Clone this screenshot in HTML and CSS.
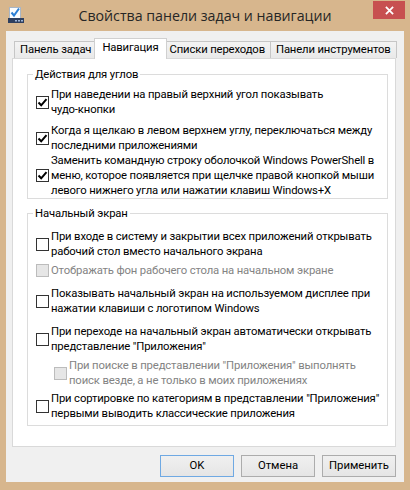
FILE: index.html
```html
<!DOCTYPE html>
<html lang="ru">
<head>
<meta charset="utf-8">
<title>Свойства панели задач и навигации</title>
<link rel="stylesheet" href="styles.css">
</head>
<body>
<div class="window">
  <div class="titlebar">
    <div class="tb-left">
      <svg class="app-icon" viewBox="0 0 16 16" width="16" height="16">
        <rect x="1.5" y="0.5" width="11" height="11" fill="#fbfdff" stroke="#a9b6c6"/>
        <path d="M3.5 5.5 L6 8.5 L11 1.5" fill="none" stroke="#2b7fd6" stroke-width="2"/>
        <rect x="0" y="11" width="16" height="5" fill="#2e3f5f"/>
        <rect x="7" y="13" width="2" height="1.5" fill="#9fb6d8"/>
        <rect x="10" y="13" width="2" height="1.5" fill="#9fb6d8"/>
        <rect x="13" y="13" width="2" height="1.5" fill="#9fb6d8"/>
      </svg>
    </div>
    <div class="title">Свойства панели задач и навигации</div>
    <div class="tb-right">
      <div class="close">
        <svg viewBox="0 0 10 10" width="9" height="9"><path d="M1 1 L9 9 M9 1 L1 9" stroke="#fff" stroke-width="2"/></svg>
      </div>
    </div>
  </div>

  <div class="client">
    <div class="tabs">
      <div class="tab">Панель задач</div>
      <div class="tab active">Навигация</div>
      <div class="tab">Списки переходов</div>
      <div class="tab">Панели инструментов</div>
    </div>

    <div class="panel">
      <fieldset class="group">
        <legend>Действия для углов</legend>
        <div class="check gap5">
          <span class="box checked"><svg viewBox="0 0 11 11" width="11" height="11"><path d="M1.5 5.5 L4.2 8.3 L9.5 2.2" fill="none" stroke="#000" stroke-width="2"/></svg></span>
          <span class="text">При наведении на правый верхний угол показывать<br>чудо-кнопки</span>
        </div>
        <div class="check gap6">
          <span class="box checked"><svg viewBox="0 0 11 11" width="11" height="11"><path d="M1.5 5.5 L4.2 8.3 L9.5 2.2" fill="none" stroke="#000" stroke-width="2"/></svg></span>
          <span class="text">Когда я щелкаю в левом верхнем углу, переключаться между<br>последними приложениями</span>
        </div>
        <div class="check">
          <span class="box checked"><svg viewBox="0 0 11 11" width="11" height="11"><path d="M1.5 5.5 L4.2 8.3 L9.5 2.2" fill="none" stroke="#000" stroke-width="2"/></svg></span>
          <span class="text">Заменить командную строку оболочкой Windows PowerShell в<br>меню, которое появляется при щелчке правой кнопкой мыши<br>левого нижнего угла или нажатии клавиш Windows+X</span>
        </div>
      </fieldset>

      <fieldset class="group second">
        <legend>Начальный экран</legend>
        <div class="check gap8">
          <span class="box"></span>
          <span class="text">При входе в систему и закрытии всех приложений открывать<br>рабочий стол вместо начального экрана</span>
        </div>
        <div class="check gap4 disabled">
          <span class="box"></span>
          <span class="text">Отображать фон рабочего стола на начальном экране</span>
        </div>
        <div class="check gap8">
          <span class="box"></span>
          <span class="text">Показывать начальный экран на используемом дисплее при<br>нажатии клавиши с логотипом Windows</span>
        </div>
        <div class="check gap8">
          <span class="box"></span>
          <span class="text">При переходе на начальный экран автоматически открывать<br>представление &quot;Приложения&quot;</span>
        </div>
        <div class="check gap4 sub disabled">
          <span class="box"></span>
          <span class="text">При поиске в представлении &quot;Приложения&quot; выполнять<br>поиск везде, а не только в моих приложениях</span>
        </div>
        <div class="check gap3">
          <span class="box"></span>
          <span class="text">При сортировке по категориям в представлении &quot;Приложения&quot;<br>первыми выводить классические приложения</span>
        </div>
      </fieldset>
    </div>

    <div class="buttons">
      <button class="btn default">OK</button>
      <button class="btn">Отмена</button>
      <button class="btn">Применить</button>
    </div>
  </div>
</div>
</body>
</html>
```

FILE: styles.css
```css
html, body {
  margin: 0;
  padding: 0;
}

body {
  width: 410px;
  height: 490px;
  overflow: hidden;
  background: #d7b68d;
  font-family: Roboto, "Open Sans", sans-serif;
  font-size: 11.3px;
  letter-spacing: -0.15px;
  color: #000;
}

.window {
  height: 490px;
  display: flex;
  flex-direction: column;
}

/* Title bar */
.titlebar {
  height: 31px;
  flex: none;
  display: grid;
  grid-template-columns: 1fr auto 1fr;
}

.tb-left {
  padding: 7px 0 0 8px;
}

.app-icon {
  display: block;
}

.title {
  font-family: "Open Sans", sans-serif;
  font-size: 14.2px;
  letter-spacing: 0;
  line-height: 20px;
  padding-top: 6px;
  color: #262626;
  white-space: nowrap;
}

.tb-right {
  display: flex;
  justify-content: flex-end;
  align-items: flex-start;
}

.close {
  width: 32px;
  height: 18px;
  margin: 1px 5px 0 0;
  background: #c75050;
  display: flex;
  align-items: center;
  justify-content: center;
}

.close svg {
  display: block;
}

/* Client area */
.client {
  margin: 0 6px;
  height: 451px;
  box-sizing: border-box;
  background: #f0f0f0;
  padding: 7px 8px 0 6px;
}

/* Tabs */
.tabs {
  display: flex;
  align-items: flex-end;
  height: 21px;
  padding-left: 3px;
  margin-bottom: -1px;
  position: relative;
  z-index: 1;
}

.tab {
  height: 17px;
  box-sizing: border-box;
  line-height: 16px;
  padding: 0 5px;
  margin: 0 0 1px -1px;
  border: 1px solid #c6c6c6;
  border-bottom: 0;
  background: linear-gradient(#f3f3f3, #e9e9e9);
  white-space: nowrap;
}

.tab.active {
  height: 21px;
  line-height: 18px;
  padding: 0 7px;
  margin: 0 -2px 0 -3px;
  background: #fff;
  border-color: #d0d0d0;
  position: relative;
  z-index: 2;
}

/* Tab page */
.panel {
  height: 389px;
  box-sizing: border-box;
  background: #fff;
  border: 1px solid #d9d9d9;
  padding: 8px 7px 0 14px;
}

.group {
  margin: 0;
  padding: 0 0 0 8px;
  border: 1px solid #dcdcdc;
  min-width: 0;
}

.group legend {
  padding: 0 2px;
  margin-left: -3px;
  line-height: 15px;
}

.group.second {
  margin-top: 7px;
  padding-bottom: 4px;
}

.check {
  display: flex;
  align-items: center;
  line-height: 15px;
  white-space: nowrap;
}

.check.sub {
  margin-left: 18px;
}

.gap3 { margin-top: 3px; }
.gap4 { margin-top: 4px; }
.gap5 { margin-top: 5px; }
.gap6 { margin-top: 6px; }
.gap8 { margin-top: 8px; }

.box {
  width: 13px;
  height: 13px;
  box-sizing: border-box;
  border: 1px solid #333;
  background: #fff;
  margin-right: 2px;
  flex: none;
  display: flex;
  align-items: center;
  justify-content: center;
}

.box svg {
  display: block;
}

.check.disabled .box {
  border-color: #bcbcbc;
  background: #e6e6e6;
}

.check.disabled .text {
  color: #838383;
}

/* Buttons */
.buttons {
  display: flex;
  justify-content: flex-end;
  gap: 7px;
  margin-top: 8px;
}

.btn {
  width: 74px;
  height: 22px;
  box-sizing: border-box;
  padding: 0;
  border: 1px solid #acacac;
  background: linear-gradient(#f0f0f0, #e5e5e5);
  font: inherit;
  line-height: 20px;
  color: #000;
  text-align: center;
}

.btn.default {
  border-color: #6fa9e3;
}
```
